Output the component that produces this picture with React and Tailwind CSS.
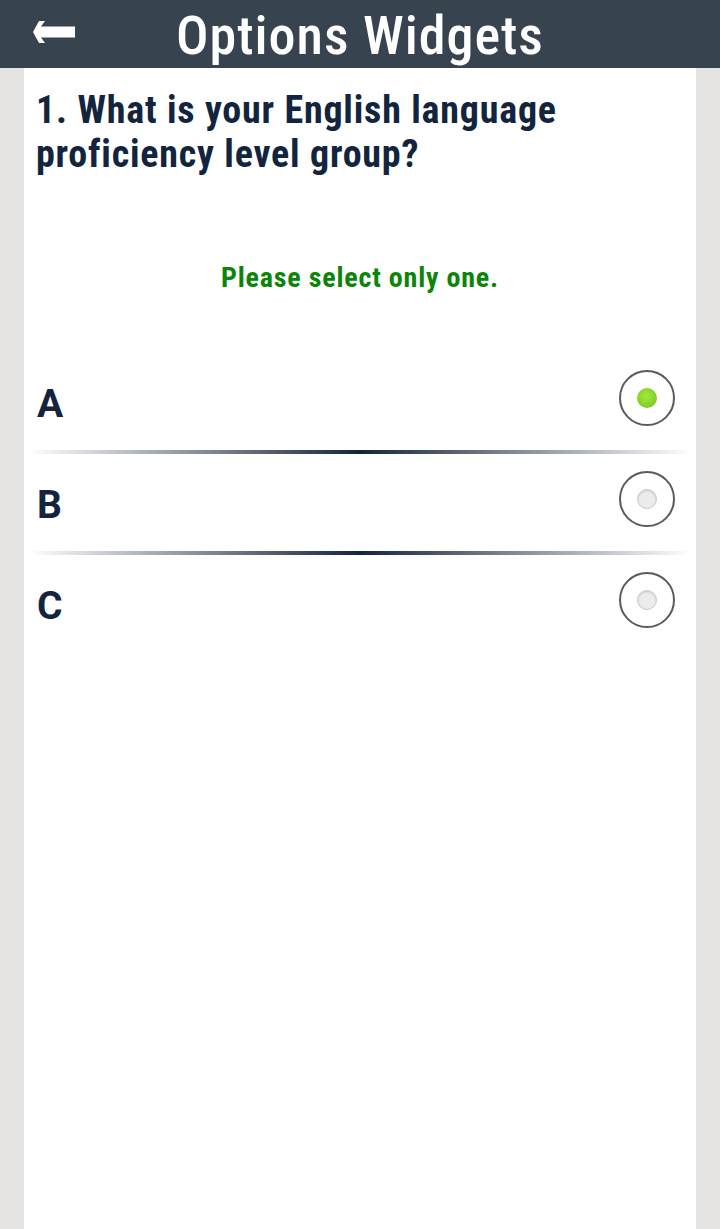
function Radio({ checked }) {
  return (
    <span className="mb-[7px] flex h-[56px] w-[56px] items-center justify-center rounded-full border-[2.5px] border-[#5a5a5a] bg-white">
      {checked ? (
        <span className="h-[20px] w-[20px] rounded-full bg-[radial-gradient(circle_at_45%_40%,#a6e83c,#6cc21a)]" />
      ) : (
        <span className="h-[20px] w-[20px] rounded-full border border-[#c9c9c9] bg-[#ececec] shadow-[inset_0_1px_2px_rgba(0,0,0,0.15)]" />
      )}
    </span>
  );
}

function Divider() {
  return (
    <div className="mx-[4px] h-[4px] bg-[linear-gradient(to_right,rgba(19,36,63,0)_0%,#13243f_50%,rgba(19,36,63,0)_100%)]" />
  );
}

const options = ["A", "B", "C"];

export default function App() {
  return (
    <div className="flex min-h-[1229px] flex-col bg-[#e5e4e2] font-['Roboto_Condensed','Roboto',sans-serif] [font-stretch:condensed]">
      <header className="flex h-[68px] items-center bg-[#37444f] pl-[33px]">
        <svg width="42" height="22" viewBox="0 0 42 22" className="mb-[4px] shrink-0">
          <path d="M0 11 L6 0 L12 0 L8 5.5 L42 5.5 L42 16.5 L8 16.5 L12 22 L6 22 Z" fill="#fff" />
        </svg>
        <h1 className="ml-[101px] mt-[4px] text-[54px] font-medium leading-none tracking-[1px] text-white">Options Widgets</h1>
      </header>
      <main className="mx-[24px] flex flex-1 flex-col bg-white">
        <h2 className="px-[12px] pt-[20px] text-[38px] font-bold leading-[44px] tracking-[0.8px] text-[#13243f]">
          1. What is your English language
          <br />
          proficiency level group?
        </h2>
        <p className="mt-[81px] text-center text-[28px] font-bold tracking-[0.8px] text-[#0a8507]">Please select only one.</p>
        <div className="mt-[54px] flex flex-col">
          {options.map((o, i) => (
            <div key={o}>
              <div className="flex h-[97px] items-center justify-between pl-[13px] pr-[21px]">
                <span className="mt-[6px] font-['Roboto',sans-serif] text-[39px] font-bold [font-stretch:normal] text-[#13243f]">{o}</span>
                <Radio checked={i === 0} />
              </div>
              {i < options.length - 1 && <Divider />}
            </div>
          ))}
        </div>
      </main>
    </div>
  );
}
